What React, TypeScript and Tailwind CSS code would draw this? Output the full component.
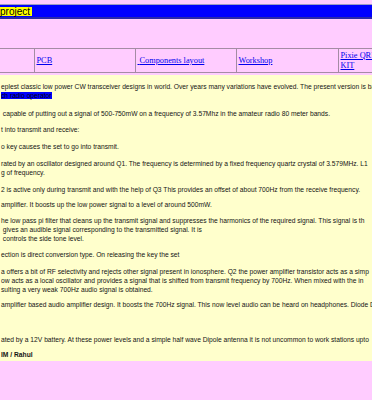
const links = [
  { label: '', w: 'w-[102px]' },
  { label: 'PCB', w: 'w-[101px]' },
  { label: ' Components layout', w: 'w-[101px]' },
  { label: 'Workshop', w: 'w-[102px]' },
  { label: 'Pixie QRP KIT', w: 'w-[48px]' },
];

const paragraphs: { mt: string; lines: string[]; bold?: boolean }[] = [
  {
    mt: 'mt-0',
    lines: [
      'eplest classic low power CW transceiver designs in world. Over years many variations have evolved. The present version is ba',
    ],
  },
  {
    mt: 'mt-[8.6px]',
    lines: [' capable of putting out a signal of 500-750mW on a frequency of 3.57Mhz in the amateur radio 80 meter bands.'],
  },
  { mt: 'mt-[7.7px]', lines: ['t into transmit and receive:'] },
  { mt: 'mt-[7.7px]', lines: ['o key causes the set to go into transmit.'] },
  {
    mt: 'mt-[7.6px]',
    lines: [
      'rated by an oscillator designed around Q1. The frequency is determined by a fixed frequency quartz crystal of 3.579MHz. L1',
      'g of frequency.',
    ],
  },
  {
    mt: 'mt-[8px]',
    lines: ['2 is active only during transmit and with the help of Q3 This provides an offset of about 700Hz from the receive frequency.'],
  },
  { mt: 'mt-[6px]', lines: ['amplifier. It boosts up the low power signal to a level of around 500mW.'] },
  {
    mt: 'mt-[7px]',
    lines: [
      'he low pass pi filter that cleans up the transmit signal and suppresses the harmonics of the required signal. This signal is th',
      ' gives an audible signal corresponding to the transmitted signal. It is',
      ' controls the side tone level.',
    ],
  },
  { mt: 'mt-[7.5px]', lines: ['ection is direct conversion type. On releasing the key the set'] },
  {
    mt: 'mt-[8.3px]',
    lines: [
      'a offers a bit of RF selectivity and rejects other signal present in ionosphere. Q2 the power amplifier transistor acts as a simp',
      'ow acts as a local oscillator and provides a signal that is shifted from transmit frequency by 700Hz. When mixed with the in',
      'sulting a very weak 700Hz audio signal is obtained.',
    ],
  },
  {
    mt: 'mt-[6px]',
    lines: ['amplifier based audio amplifier design. It boosts the 700Hz signal. This now level audio can be heard on headphones. Diode D'],
  },
  {
    mt: 'mt-[25.7px]',
    lines: ['ated by a 12V battery. At these power levels and a simple half wave Dipole antenna it is not uncommon to work stations upto'],
  },
  { mt: 'mt-[6.3px]', lines: ['IM / Rahul'], bold: true },
];

export default function App() {
  return (
    <div className="w-[372px] h-[400px] overflow-hidden bg-[#ffccff] font-['Liberation_Sans',Arial,sans-serif]">
      {/* title bar */}
      <div className="mt-[4px] h-[15px] bg-[#0000ff] border-t border-t-[#9c9cc4] border-b-2 border-b-[#2a2aa8] flex items-center">
        <span className="bg-[#ffff00] text-black text-[10px] leading-[9px] h-[9px] pr-[2px] whitespace-nowrap">
          project
        </span>
      </div>

      {/* menu table */}
      <div className="mt-[29px] w-[372px] overflow-hidden">
        <div className="flex -ml-[67px] w-[600px] border-t border-b border-[#a48ca4]">
          {links.map((link, i) => (
            <div
              key={i}
              className={`${link.w} h-[23px] shrink-0 flex items-center pl-[1.5px] pr-[2px] border-r border-[#a48ca4] font-['Liberation_Serif','Times_New_Roman',serif] text-[8.3px] leading-[10px]`}
            >
              {link.label && (
                <a href="#" className="text-[#0000ee] underline whitespace-pre-wrap">
                  {link.label}
                </a>
              )}
            </div>
          ))}
        </div>
      </div>

      {/* body text */}
      <div className="mt-[2px] bg-[#ffffcc] pt-[7px] pb-[1.5px] text-[#141414] text-[6.7px] leading-[9px] overflow-hidden">
        {paragraphs.map((p, i) => (
          <div key={i} className={`${p.mt} ${p.bold ? 'font-bold' : ''}`}>
            {p.lines.map((line, j) => (
              <div key={j} className="whitespace-pre pl-[1px]">
                {line}
              </div>
            ))}
            {i === 0 && (
              <div className="pl-[1px]">
                <span className="bg-[#0000ff] text-black">ch radio operator</span>
              </div>
            )}
          </div>
        ))}
      </div>
    </div>
  );
}
